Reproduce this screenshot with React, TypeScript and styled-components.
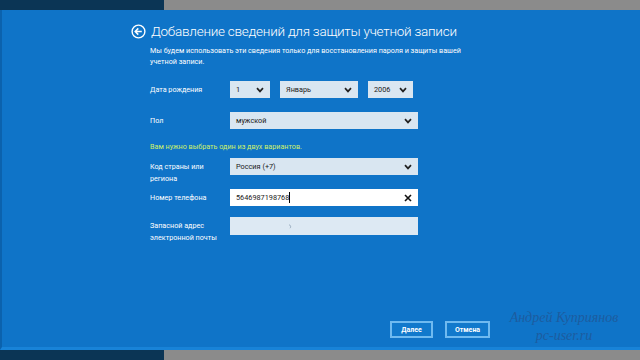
import React from "react";
import styled, { createGlobalStyle } from "styled-components";

const GlobalStyle = createGlobalStyle`
  html, body { margin: 0; padding: 0; }
  body {
    width: 640px;
    height: 360px;
    overflow: hidden;
    font-family: Roboto, "Open Sans", sans-serif;
  }
`;

const Page = styled.div`
  width: 640px;
  height: 360px;
  display: grid;
  grid-template-rows: 10px 340px 10px;
  background: #0f74c8;
`;

const Bar = styled.div`
  display: flex;
`;

const BarDark = styled.div`
  width: 164px;
  background: #0b3555;
`;

const BarGray = styled.div`
  flex: 1;
  background: #8b8b8b;
`;

const Main = styled.div`
  position: relative;
  display: flex;
  flex-direction: column;
  box-sizing: border-box;
  border-left: 2px solid #0b62ad;
  border-bottom: 3px solid #1883d8;
  padding: 10px 0 9px 129px;
  color: #fff;
`;

const Header = styled.div`
  display: flex;
  align-items: center;
  gap: 5px;
  height: 22px;
`;

const Title = styled.h1`
  margin: 0;
  font-size: 13.5px;
  font-weight: 300;
  letter-spacing: -0.25px;
  white-space: nowrap;
`;

const Body = styled.div`
  padding-left: 19px;
  width: 330px;
`;

const Intro = styled.p`
  margin: 3px 0 0;
  font-size: 7.2px;
  line-height: 11px;
`;

const Row = styled.div<{ $top: number }>`
  display: grid;
  grid-template-columns: 80px 188px;
  margin-top: ${(p) => p.$top}px;
`;

const Label = styled.div`
  font-size: 7.2px;
  line-height: 12px;
  padding-top: 3px;
`;

const Controls = styled.div`
  display: flex;
  gap: 10px;
`;

const Select = styled.div<{ $w?: number; $h?: number }>`
  width: ${(p) => (p.$w ? `${p.$w}px` : "100%")};
  height: ${(p) => p.$h ?? 17}px;
  box-sizing: border-box;
  background: #d9e6f1;
  color: #1a1a1a;
  font-size: 7.3px;
  display: flex;
  align-items: center;
  justify-content: space-between;
  padding: 0 6px 0 6px;
`;

const TextBox = styled(Select)`
  background: ${(p) => (p.$h ? "#dde9f3" : "#ffffff")};
  justify-content: flex-start;
`;

const Caret = styled.span`
  display: inline-block;
  width: 1px;
  height: 11px;
  background: #000;
`;

const Clear = styled.span`
  margin-left: auto;
  display: flex;
`;

const Warning = styled.div`
  margin-top: 12px;
  font-size: 7.2px;
  line-height: 11px;
  color: #cdf06a;
`;

const Footer = styled.div`
  display: flex;
  gap: 12px;
  margin: auto 0 0 259px;
`;

const Button = styled.button<{ $w: number }>`
  width: ${(p) => p.$w}px;
  height: 17px;
  box-sizing: border-box;
  border: 2px solid #6fbaf0;
  background: #1179cc;
  color: #fff;
  font-family: inherit;
  font-size: 7px;
  font-weight: 700;
  padding: 0;
`;

const Watermark = styled.div`
  position: absolute;
  left: 500px;
  top: 299px;
  width: 124px;
  text-align: center;
  font-family: "Liberation Serif", serif;
  font-style: italic;
  font-size: 14px;
  line-height: 18px;
  color: #1d5c9f;
`;

const Chevron = () => (
  <svg width="8" height="6" viewBox="0 0 8 6">
    <path d="M1 1.2 L4 4.4 L7 1.2" fill="none" stroke="#222" strokeWidth="1.7" />
  </svg>
);

const BackIcon = () => (
  <svg width="15" height="15" viewBox="0 0 15 15">
    <circle cx="7.5" cy="7.5" r="6.4" fill="none" stroke="#fff" strokeWidth="1.4" />
    <path d="M4.2 7.5 H10.8 M7.3 4.4 L4.2 7.5 L7.3 10.6" fill="none" stroke="#fff" strokeWidth="1.5" />
  </svg>
);

const ClearIcon = () => (
  <svg width="8" height="8" viewBox="0 0 8 8">
    <path d="M1 1 L7 7 M7 1 L1 7" stroke="#111" strokeWidth="1.6" />
  </svg>
);

const Spinner = () => (
  <svg width="5" height="5" viewBox="0 0 5 5" style={{ marginLeft: 52 }}>
    <path d="M1.2 0.8 A2 2 0 0 1 2 4.2" fill="none" stroke="#8aa0b4" strokeWidth="0.8" />
  </svg>
);

export default function App() {
  return (
    <>
      <GlobalStyle />
      <Page>
        <Bar>
          <BarDark />
          <BarGray />
        </Bar>
        <Main>
          <Header>
            <BackIcon />
            <Title>Добавление сведений для защиты учетной записи</Title>
          </Header>
          <Body>
            <Intro>
              Мы будем использовать эти сведения только для восстановления пароля и защиты вашей учетной записи.
            </Intro>
            <Row $top={14}>
              <Label>Дата рождения</Label>
              <Controls>
                <Select $w={40}>1<Chevron /></Select>
                <Select $w={78}>Январь<Chevron /></Select>
                <Select $w={45}>2006<Chevron /></Select>
              </Controls>
            </Row>
            <Row $top={14}>
              <Label>Пол</Label>
              <Select>мужской<Chevron /></Select>
            </Row>
            <Warning>Вам нужно выбрать один из двух вариантов.</Warning>
            <Row $top={6}>
              <Label>Код страны или региона</Label>
              <Select>Россия (+7)<Chevron /></Select>
            </Row>
            <Row $top={4}>
              <Label>Номер телефона</Label>
              <TextBox>
                5646987198768<Caret />
                <Clear><ClearIcon /></Clear>
              </TextBox>
            </Row>
            <Row $top={11}>
              <Label>Запасной адрес электронной почты</Label>
              <TextBox $h={18}><Spinner /></TextBox>
            </Row>
          </Body>
          <Footer>
            <Button $w={43}>Далее</Button>
            <Button $w={45}>Отмена</Button>
          </Footer>
          <Watermark>
            Андрей Куприянов
            <br />
            pc-user.ru
          </Watermark>
        </Main>
        <Bar>
          <BarDark />
          <BarGray />
        </Bar>
      </Page>
    </>
  );
}
